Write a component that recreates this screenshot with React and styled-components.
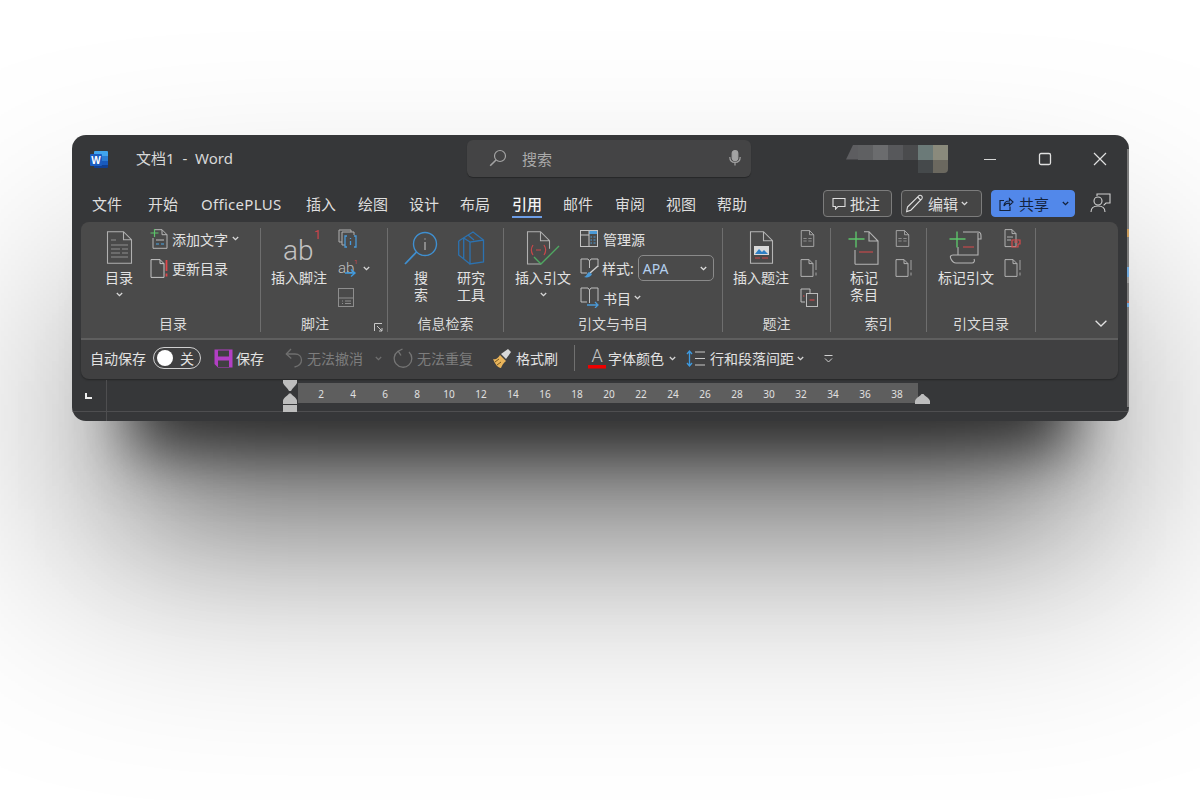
import React from 'react'
import styled, { createGlobalStyle } from 'styled-components'

const GlobalStyle = createGlobalStyle`
  html, body { margin: 0; padding: 0; background: #fff; }
  body { font-family: "Noto Sans", "Noto Sans CJK SC", sans-serif; overflow: hidden; }
  svg { display: block; flex: none; }
`

const Page = styled.div`
  width: 1200px;
  height: 800px;
  padding: 135px 0 0 72px;
  box-sizing: border-box;
  background: #fff;
  overflow: hidden;
  isolation: isolate;
`
const Frame = styled.div`
  position: relative;
  width: 1057px;
  height: 286px;
  border-radius: 14px;
  box-shadow: 0 87px 60px -58px rgba(0, 0, 0, 0.7);
  /* the two wide shadows are blurred layers, a huge box-shadow leaves seams */
  &::before {
    content: '';
    position: absolute;
    inset: 0;
    z-index: -1;
    transform: translateY(140px);
    background: rgba(0, 0, 0, 0.36);
    filter: blur(110px);
  }
  &::after {
    content: '';
    position: absolute;
    inset: 78px;
    z-index: -1;
    transform: translateY(167px);
    background: rgba(0, 0, 0, 0.32);
    filter: blur(60px);
  }
`
const Win = styled.div`
  width: 100%;
  height: 100%;
  background: #363739;
  border-radius: 14px;
  overflow: hidden;
  display: flex;
  flex-direction: column;
`
const EdgeStrip = styled.div`
  position: absolute;
  right: 0;
  top: 14px;
  bottom: 14px;
  width: 2px;
  background: linear-gradient(
    to bottom,
    #7c7c7c 0 80px,
    #c89a5a 80px 88px,
    #7c7c7c 88px 118px,
    #6fa8dc 118px 128px,
    #9a9a9a 128px 134px,
    #7c7c7c 134px 152px,
    #b06a5a 152px 154px,
    #6fa8dc 154px 158px,
    #7c7c7c 158px
  );
`

const TitleBar = styled.div`
  height: 47px;
  display: flex;
  align-items: center;
  flex: none;
  color: #dcdcdc;
`
const LogoSlot = styled.div`
  margin: 2px 0 0 18px;
  width: 46px;
`
const DocTitle = styled.div`
  width: 331px;
  margin-top: -2px;
  font-size: 15px;
  white-space: pre;
  color: #d8d8d8;
`
const SearchBox = styled.div`
  width: 284px;
  height: 37px;
  margin-top: -1px;
  border-radius: 6px;
  background: #444445;
  box-shadow: 0 1px 1px rgba(0, 0, 0, 0.3);
  display: flex;
  align-items: center;
  padding: 0 10px 0 22px;
  box-sizing: border-box;
  color: #a9a9a9;
  font-size: 15px;
  gap: 15px;
`
const MicSlot = styled.div`
  margin-left: auto;
`
const Mosaic = styled.div`
  margin-left: 95px;
  width: 102px;
  height: 28px;
  display: grid;
  grid-template-columns: 12px repeat(6, 15px);
  grid-template-rows: 15px 13px;
`
const Cell = styled.div`
  background: ${({ $c }) => $c};
  &:first-child {
    clip-path: polygon(60% 0, 100% 0, 100% 100%, 0 100%);
  }
  &:last-child {
    border-radius: 0 0 4px 0;
  }
`
const WinControls = styled.div`
  display: flex;
  align-items: center;
  margin-left: 35px;
  gap: 41px;
`

const TabRow = styled.div`
  height: 40px;
  flex: none;
  display: flex;
  align-items: center;
  padding-left: 20px;
`
const Tab = styled.div`
  width: ${({ $w }) => $w}px;
  flex: none;
  position: relative;
  margin-top: 4px;
  font-size: 15px;
  line-height: 22px;
  white-space: nowrap;
  letter-spacing: ${({ $ls }) => $ls ?? 0}px;
  color: ${({ $active }) => ($active ? '#f4f4f4' : '#dedede')};
  font-weight: ${({ $active }) => ($active ? 500 : 400)};
  &::after {
    content: '';
    display: ${({ $active }) => ($active ? 'block' : 'none')};
    position: absolute;
    left: 0;
    bottom: -3px;
    width: 30px;
    height: 2px;
    background: #6d9de6;
  }
`
const TabActions = styled.div`
  margin-left: auto;
  margin-top: 2px;
  padding-right: 18px;
  display: flex;
  align-items: center;
`
const ActionBtn = styled.div`
  height: 27px;
  width: ${({ $w }) => $w}px;
  margin-right: ${({ $mr }) => $mr}px;
  box-sizing: border-box;
  border: 1px solid ${({ $blue }) => ($blue ? '#5288ea' : '#7c7c7c')};
  border-radius: 4px;
  background: ${({ $blue }) => ($blue ? '#5288ea' : '#454545')};
  color: ${({ $blue }) => ($blue ? '#14233d' : '#e0e0e0')};
  font-size: 15px;
  display: flex;
  align-items: center;
  padding-left: ${({ $pl }) => $pl}px;
  gap: ${({ $gap }) => $gap}px;
`
const ChevGap = styled.span`
  margin-left: ${({ $ml }) => $ml}px;
`

const Ribbon = styled.div`
  position: relative;
  margin: 0 11px 0 9px;
  height: 116px;
  flex: none;
  background: #4a4a4a;
  border-radius: 8px 8px 0 0;
  display: flex;
  color: #e2e2e2;
`
const Sep = styled.div`
  width: 1px;
  margin: 6px 0;
  background: #6e6e6e;
  flex: none;
`
const Group = styled.div`
  position: relative;
  width: ${({ $w }) => $w}px;
  flex: none;
  display: flex;
  flex-direction: column;
`
const GroupBody = styled.div`
  height: 92px;
  padding: 4px 0 0 ${({ $pl }) => $pl}px;
  box-sizing: border-box;
  display: flex;
  gap: ${({ $gap }) => $gap}px;
`
const GroupLabel = styled.div`
  height: 20px;
  line-height: 20px;
  font-size: 14px;
  text-align: center;
  color: #dcdcdc;
  padding: 0 ${({ $pr }) => $pr ?? 0}px 0 ${({ $pl }) => $pl ?? 0}px;
`
const Launcher = styled.div`
  position: absolute;
  right: 4px;
  bottom: 6px;
`
const Big = styled.div`
  width: ${({ $w }) => $w}px;
  flex: none;
  display: flex;
  flex-direction: column;
  align-items: center;
  padding-top: 5px;
  font-size: 14px;
  line-height: 17px;
  text-align: center;
  white-space: nowrap;
`
const BigIcon = styled.div`
  height: 38px;
  display: flex;
  align-items: flex-start;
  justify-content: center;
`
const BigChevron = styled.div`
  height: 17px;
  display: flex;
  align-items: center;
  justify-content: center;
`
const SmallCol = styled.div`
  display: flex;
  flex-direction: column;
  margin-top: -2px;
`
const SmallRow = styled.div`
  height: 29.5px;
  display: flex;
  align-items: center;
  gap: ${({ $gap }) => $gap ?? 4}px;
  font-size: 14px;
  white-space: nowrap;
`
const StyleSelect = styled.div`
  width: 76px;
  height: 26px;
  margin-left: 2px;
  box-sizing: border-box;
  border: 1px solid #8a8a8a;
  border-radius: 5px;
  display: flex;
  align-items: center;
  justify-content: space-between;
  padding: 0 6px 0 4px;
  color: #b4cfee;
  font-size: 14px;
`
const Collapse = styled.div`
  position: absolute;
  right: 11px;
  bottom: 11px;
`

const Qat = styled.div`
  margin: 0 11px 0 9px;
  height: 41px;
  flex: none;
  box-sizing: border-box;
  border-top: 2px solid #5f5f5f;
  background: #404041;
  border-radius: 0 0 8px 8px;
  box-shadow: 0 1px 2px rgba(0, 0, 0, 0.35);
  display: flex;
  align-items: center;
  padding: 0 0 3px 9px;
  color: #e2e2e2;
  font-size: 14px;
  white-space: nowrap;
`
const QatItem = styled.div`
  display: flex;
  align-items: center;
  gap: ${({ $gap }) => $gap ?? 4}px;
  margin-left: ${({ $ml }) => $ml ?? 0}px;
  color: ${({ $dim }) => ($dim ? '#7d7d7d' : 'inherit')};
`
const Toggle = styled.div`
  width: 48px;
  height: 22px;
  box-sizing: border-box;
  border: 1px solid #cfcfcf;
  border-radius: 11px;
  display: flex;
  align-items: center;
  justify-content: space-between;
  padding: 0 6px 0 3px;
  font-size: 14px;
`
const Knob = styled.div`
  width: 16px;
  height: 16px;
  border-radius: 50%;
  background: #fff;
`
const QatSep = styled.div`
  width: 1px;
  height: 26px;
  margin-left: 16px;
  background: #707070;
`

const RulerArea = styled.div`
  position: relative;
  flex: 1;
  margin-top: 1px;
`
const CornerMark = styled.div`
  position: absolute;
  left: 13px;
  top: 13px;
  width: 7px;
  height: 6px;
  border-left: 2px solid #eee;
  border-bottom: 2px solid #eee;
  box-sizing: border-box;
`
const VLine = styled.div`
  position: absolute;
  left: 34px;
  top: 0;
  bottom: 0;
  width: 1px;
  background: #4e4e50;
`
const HLine = styled.div`
  position: absolute;
  left: 0;
  right: 0;
  top: 31px;
  height: 1px;
  background: #4e4e50;
`
const Band = styled.div`
  position: absolute;
  left: 226px;
  top: 3px;
  width: 620px;
  height: 20px;
  background: #5e5e5e;
  display: flex;
  padding-left: 7px;
  box-sizing: border-box;
`
const Tick = styled.div`
  width: 32px;
  flex: none;
  text-align: center;
  font-size: 10px;
  line-height: 22px;
  color: #e0e0e0;
`
const IndentMark = styled.div`
  position: absolute;
  left: ${({ $x }) => $x}px;
  top: ${({ $y }) => $y}px;
`
const AbSvg = styled.svg`
  margin-top: -3px;
`

const Chev = ({ c = '#d8d8d8', s = 7 }) => (
  <svg width={s} height={5} viewBox="0 0 7 5">
    <path d="M.8 1 3.500 3.700 6.200 1" fill="none" stroke={c} strokeWidth="1.300" />
  </svg>
)

const Doc = ({ w = 18, h = 20, stroke = '#b5b5b5', children }) => (
  <svg width={w} height={h} viewBox="0 0 18 20" fill="none" stroke={stroke} strokeWidth="1">
    <path d="M1.500.5h10l5 5v14h-15z M11.500.5v5h5" />
    {children}
  </svg>
)

const WordLogo = () => (
  <svg width="19" height="18" viewBox="0 0 19 18">
    <path d="M5 0h12a1 1 0 0 1 1 1v4H4V1a1 1 0 0 1 1-1z" fill="#41a5ee" />
    <rect x="4" y="5" width="14" height="5" fill="#2b7cd3" />
    <rect x="4" y="10" width="14" height="4" fill="#185abd" />
    <path d="M4 14h14v2a1 1 0 0 1-1 1H5a1 1 0 0 1-1-1z" fill="#103f91" />
    <rect x="0" y="3" width="12" height="12" rx="1" fill="#1a5cc0" />
    <text x="6" y="12.500" fontSize="10" fontWeight="700" fill="#fff" textAnchor="middle" fontFamily="Liberation Sans">W</text>
  </svg>
)

const SearchGlass = () => (
  <svg width="18" height="18" viewBox="0 0 18 18" fill="none" stroke="#a3a3a3" strokeWidth="1.200">
    <circle cx="11" cy="7" r="5.500" />
    <path d="M7 11 1.200 16.800" strokeWidth="1.600" />
  </svg>
)
const Mic = () => (
  <svg width="12" height="16" viewBox="0 0 12 16" fill="none" stroke="#a3a3a3" strokeWidth="1.200">
    <rect x="3.200" y=".6" width="5.600" height="10" rx="2.800" fill="#a3a3a3" />
    <path d="M.8 7c0 3.400 2.200 5.400 5.200 5.400s5.200-2 5.200-5.400M6 12.400V15.400" />
  </svg>
)

const BubbleIcon = () => (
  <svg width="14" height="13" viewBox="0 0 14 13" fill="none" stroke="#dedede" strokeWidth="1.100">
    <path d="M1 1.500h12v8H6l-2.400 2.600V9.500H1z" />
  </svg>
)
const PencilIcon = () => (
  <svg width="20" height="20" viewBox="0 0 20 20" fill="none" stroke="#e0e0e0" strokeWidth="1.100">
    <path d="M2.500 14 14 2.600a2.200 2.200 0 0 1 3 3L5.800 17.200 1.600 18.600z M12.600 4l3 3" />
  </svg>
)
const ShareIcon = () => (
  <svg width="15" height="15" viewBox="0 0 15 15" fill="none" stroke="#14233d" strokeWidth="1.200">
    <path d="M5 4.500H1v10h10v-4" />
    <path d="M5 10c0-3.500 2.500-5 5.500-5V2.600L14 6l-3.500 3.400V7.200C8 7.200 6 8 5 10z" />
  </svg>
)
const CoauthorIcon = () => (
  <svg width="21" height="20" viewBox="0 0 21 20" fill="none" stroke="#d0d0d0" strokeWidth="1.100">
    <path d="M7 3V1h13v9h-4l-2.400 2.400" />
    <circle cx="8" cy="8" r="4" />
    <path d="M1 19c0-4 3-6 7-6s7 2 7 6" />
  </svg>
)

const TocBig = () => (
  <svg width="27" height="33" viewBox="0 0 27 33" fill="none" stroke="#b0b0b0" strokeWidth="1.100">
    <path d="M1.500.7h16l8 8v23.600h-24z M17.500.7v8h8" />
    <path d="M5 9h5M5 14h17M5 18h9M16 18h6M5 22h9M16 22h6M5 26h17" stroke="#8d8d8d" />
  </svg>
)
const AddText = () => (
  <svg width="18" height="20" viewBox="0 0 18 20" fill="none">
    <path d="M4 .7h8l5 5v13.600H3V9" stroke="#b5b5b5" />
    <path d="M12 .7v5h5" stroke="#b5b5b5" />
    <path d="M4.500 0v8M.5 4h8" stroke="#5cc46a" strokeWidth="1.200" />
    <path d="M6 11h8" stroke="#bdbdbd" />
    <path d="M6 15h3M11 15h3" stroke="#4aa6e6" strokeWidth="1.200" />
  </svg>
)
const UpdateDoc = () => (
  <svg width="18" height="19" viewBox="0 0 18 19" fill="none">
    <path d="M1 .6h9l4 4v13.800H1z M10 .6v4h4" stroke="#c4c4c4" />
    <path d="M16.500 1v11M16.500 14.500v3" stroke="#e0464a" strokeWidth="1.800" />
  </svg>
)
const AbBig = () => (
  <AbSvg width="42" height="41" viewBox="0 -3 42 41">
    <text x="5" y="29" fontSize="28" fontWeight="300" fill="#c2c2c2" fontFamily="Roboto">ab</text>
    <text x="36" y="8" fontSize="12" fill="#d0434a" fontFamily="Roboto">1</text>
  </AbSvg>
)
const EndNote = () => (
  <svg width="20" height="20" viewBox="0 0 20 20" fill="none">
    <path d="M4 3h12v3M4 3v13h3" stroke="#b0b0b0" />
    <path d="M1 1h12v2M1 1v12h3" stroke="#b0b0b0" />
    <path d="M9 7H7v11h2M16 7h2v11h-2" stroke="#4a9ad8" strokeWidth="1.300" />
    <path d="M12.500 9v1M12.500 12v4" stroke="#4a9ad8" strokeWidth="1.300" />
  </svg>
)
const NextNote = () => (
  <svg width="20" height="20" viewBox="0 0 20 20">
    <text x="0" y="15" fontSize="15" fontWeight="300" fill="#c0c0c0" fontFamily="Roboto">ab</text>
    <text x="16" y="6" fontSize="6" fill="#d0434a" fontFamily="Roboto">1</text>
    <path d="M7 15h10M13 11.500l4 3.500-4 3.500" fill="none" stroke="#3d9ae0" strokeWidth="1.400" />
  </svg>
)
const ShowNotes = () => (
  <svg width="16" height="19" viewBox="0 0 16 19" fill="none" stroke="#8e8e8e">
    <rect x=".5" y=".5" width="15" height="18" />
    <path d="M.5 10h15M4 13h1M7 13h6M4 15.500h1M7 15.500h6" />
  </svg>
)
const LauncherIcon = () => (
  <svg width="9" height="9" viewBox="0 0 9 9" fill="none" stroke="#c8c8c8">
    <path d="M.5 8V.5H8M3 3l5 5M8 5v3H5" />
  </svg>
)
const SearchBig = () => (
  <svg width="35" height="35" viewBox="0 0 35 35" fill="none" stroke="#3f8fd0">
    <circle cx="21" cy="13" r="11.500" strokeWidth="1.400" />
    <path d="M12.500 21 1 33" strokeWidth="1.800" />
    <path d="M21 11v8M21 7.500v1" stroke="#c0c0c0" strokeWidth="1.100" />
  </svg>
)
const Research = () => (
  <svg width="27" height="34" viewBox="0 0 27 34" fill="none" stroke="#2c72b0" strokeWidth="1.300">
    <path d="M.7 10 15 1l10.500 8v22L12 33V11l13.500-2" />
    <path d="M.7 10v14l5 4V7M5.700 7v21l6.300 5M5.700 7 12 11M10 4l6 5" />
  </svg>
)
const CiteBig = () => (
  <svg width="34" height="36" viewBox="0 0 34 36" fill="none">
    <path d="M15 33H1.500V.7h13l9 9v8 M14.500.7v9h9" stroke="#b0b0b0" strokeWidth="1.100" />
    <path d="M7 14c-2 3-2 7 0 10M18 14c2 3 2 7 0 10M10 19h5" stroke="#c8474a" strokeWidth="1.200" />
    <path d="M8 26l7 7 18-18" stroke="#4fa862" strokeWidth="1.400" />
  </svg>
)
const Sources = () => (
  <svg width="18" height="18" viewBox="0 0 18 18" fill="none">
    <rect x=".5" y=".5" width="17" height="16" stroke="#c4c4c4" />
    <rect x="9" y="1" width="8" height="3" fill="#4a9ad8" />
    <path d="M1 5h8" stroke="#c4c4c4" />
    <path d="M9 1v15" stroke="#c4c4c4" />
    <path d="M10.500 7h1.500M13.500 7h2M10.500 10h1.500M13.500 10h2M10.500 13h1.500M13.500 13h2" stroke="#4a9ad8" />
  </svg>
)
const BookBrush = () => (
  <svg width="20" height="21" viewBox="0 0 20 21" fill="none">
    <path d="M1 1h7l1.500 2L11 1h7v8M9.500 3v7M1 1v14h6" stroke="#c0c0c0" />
    <path d="M18 8 10 15" stroke="#cfcfcf" strokeWidth="1.400" />
    <path d="M9 14c-2 1-2 4-5 5 3 1 7 0 8-3z" fill="#4a9ad8" />
  </svg>
)
const BookArrow = () => (
  <svg width="20" height="21" viewBox="0 0 20 21" fill="none">
    <path d="M1 1h7l1.500 2L11 1h7v13M9.500 3v13M1 1v14h6" stroke="#c0c0c0" />
    <path d="M7 18h11M15 15l3 3-3 3" stroke="#4a9ad8" strokeWidth="1.300" />
  </svg>
)
const CaptionBig = () => (
  <svg width="25" height="33" viewBox="0 0 25 33" fill="none">
    <path d="M1.500.7h13l9 9v22.600h-22z M14.500.7v9h9" stroke="#b5b5b5" strokeWidth="1.100" />
    <rect x="5" y="15" width="15" height="9" fill="#d8d8d8" />
    <path d="M6 23l4-5 3 3 2-2 4 4z" fill="#2e7fc4" />
    <path d="M6 27h5M13 27h6" stroke="#d0474a" />
  </svg>
)
const SmallDoc = () => (
  <Doc w={15} h={19}>
    <path d="M4 10h4M10 10h4M4 13h4M10 13h4" stroke="#9a9a9a" />
  </Doc>
)
const DocWarn = () => (
  <svg width="18" height="18" viewBox="0 0 18 18" fill="none">
    <path d="M1 .6h8l4 4v12.800H1z M9 .6v4h4" stroke="#b0b0b0" />
    <path d="M16 1v10M16 13.500v3" stroke="#828282" strokeWidth="1.600" />
  </svg>
)
const CrossRef = () => (
  <svg width="19" height="19" viewBox="0 0 19 19" fill="none" stroke="#bcbcbc">
    <path d="M5 14H1V1h9v4" />
    <rect x="6.500" y="5.500" width="11" height="13" />
    <path d="M3 8h1.500" stroke="#d9484a" />
    <path d="M9.500 12h5" stroke="#d9484a" />
  </svg>
)
const MarkEntry = () => (
  <svg width="33" height="34" viewBox="0 0 33 34" fill="none">
    <path d="M7 33.300V19M7 33.300h23V10l-9-9.300H16M21 .7V10h9" stroke="#b5b5b5" strokeWidth="1.100" />
    <path d="M8 .5v16M.5 8h16" stroke="#5cc46a" strokeWidth="1.400" />
    <path d="M11 21h14" stroke="#d9484a" strokeWidth="1.200" />
  </svg>
)
const MarkCite = () => (
  <svg width="35" height="34" viewBox="0 0 35 34" fill="none">
    <path d="M14 1h15c2.500 0 3 2 3 4v3h-3V2M29 1H16M29 3v21H9V16M9 24H4c-3 0-3 2-2 4 1 2 2 4 5 4h16c2 0 3-2 2-4" stroke="#b5b5b5" strokeWidth="1.100" />
    <path d="M8 .5v16M.5 8h16" stroke="#5cc46a" strokeWidth="1.400" />
    <path d="M14 16h11" stroke="#d9484a" strokeWidth="1.200" />
  </svg>
)
const CiteTable = () => (
  <svg width="17" height="19" viewBox="0 0 17 19" fill="none">
    <path d="M1 .6h7l4 4v13H1z M8 .6v4h4" stroke="#b0b0b0" />
    <path d="M3 8h6M3 11h4" stroke="#b0b0b0" />
    <path d="M8 11h8v4h-2v3H8zM10 13h4" stroke="#d9484a" strokeWidth="1.200" />
  </svg>
)

const FloppyIcon = () => (
  <svg width="19" height="19" viewBox="0 0 19 19">
    <path d="M.5.5h18v18H4l-3.500-3.500z" fill="#b23fc4" />
    <rect x="4" y="1.500" width="11" height="6" fill="#404041" />
    <rect x="4" y="11.500" width="11" height="6.500" fill="#404041" />
  </svg>
)
const UndoIcon = () => (
  <svg width="18" height="20" viewBox="0 0 18 20" fill="none" stroke="#6f6f6f" strokeWidth="1.300">
    <path d="M6 1 1.300 6l5 4.500" />
    <path d="M1.500 6H10c4 0 6.500 2.500 6.500 6 0 3.500-2.500 6-7 7" />
  </svg>
)
const RedoIcon = () => (
  <svg width="20" height="20" viewBox="0 0 20 20" fill="none" stroke="#757575" strokeWidth="1.300">
    <path d="M5 3.200A8.800 8.800 0 1 0 16 4" />
    <path d="M9.500 1 5.200 3.200 8 7.500" />
  </svg>
)
const BrushIcon = () => (
  <svg width="20" height="19" viewBox="0 0 20 19">
    <path d="M1 10c3 1 5-1 7-4l6 6c-3 2-4 5-5 7-3 0-6-4-8-9z" fill="#e9b45a" />
    <path d="M3 13l4-3M5 16l4-3" stroke="#7a5a20" fill="none" />
    <path d="M9 5l7-5 3 3-5 7z" fill="#d8d8d8" />
  </svg>
)
const FontColor = () => (
  <svg width="18" height="24" viewBox="0 -2 18 24">
    <text x="9" y="14" fontSize="18" fontWeight="300" fill="#c4c4c4" textAnchor="middle" fontFamily="Roboto">A</text>
    <rect x="0" y="17" width="18" height="3.500" fill="#f00000" />
  </svg>
)
const LineSpacing = () => (
  <svg width="20" height="19" viewBox="0 0 20 19" fill="none">
    <path d="M3.500 2v15M1 5l2.500-3L6 5M1 14l2.500 3L6 14" stroke="#3d9ae0" strokeWidth="1.300" />
    <path d="M9 3h10M9 9.500h10M9 16h10" stroke="#c8c8c8" />
  </svg>
)
const MoreIcon = () => (
  <svg width="9" height="9" viewBox="0 0 9 9" fill="none" stroke="#d0d0d0">
    <path d="M.5 1.500h8M1 4.500l3.500 3.500L8 4.500" />
  </svg>
)
const LeftMarker = () => (
  <svg width="16" height="32" viewBox="0 0 16 32" fill="#bdbdbd">
    <path d="M1 0h14v3c-1 3-5 5-6 8H7C6 8 2 6 1 3z" />
    <path d="M7 13.500h2c1 2 5 3.500 6 7V24H1v-3.500c1-3.500 5-5 6-7z" />
    <rect x="1" y="25" width="14" height="7" />
  </svg>
)
const RightMarker = () => (
  <svg width="15" height="10" viewBox="0 0 15 10" fill="#bdbdbd">
    <path d="M6.500 0h2c1 2 5.500 3.500 6.500 7v3H0V7c1-3.500 5.500-5 6.500-7z" />
  </svg>
)

const TABS = [
  ['文件', 56], ['开始', 53], ['OfficePLUS', 105, false, 0.3], ['插入', 52], ['绘图', 51], ['设计', 51],
  ['布局', 52], ['引用', 51, true], ['邮件', 52], ['审阅', 51], ['视图', 51], ['帮助', 60],
]
const MOSAIC = [
  '#5d5d60', '#5f6062', '#6b6c6e', '#57585b', '#4a4b4d', '#6b7a78', '#8a8a7c',
  '#363739', '#363739', '#363739', '#363739', '#363739', '#45494b', '#6b685f',
]
const TICKS = [2, 4, 6, 8, 10, 12, 14, 16, 18, 20, 22, 24, 26, 28, 30, 32, 34, 36, 38]

const App = () => {
  return (
    <>
      <GlobalStyle />
      <Page>
        <Frame>
          <Win>
            <TitleBar>
              <LogoSlot><WordLogo /></LogoSlot>
              <DocTitle>{'文档1  -  Word'}</DocTitle>
              <SearchBox>
                <SearchGlass />
                搜索
                <MicSlot><Mic /></MicSlot>
              </SearchBox>
              <Mosaic>
                {MOSAIC.map((c, i) => <Cell key={i} $c={c} />)}
              </Mosaic>
              <WinControls>
                <svg width="14" height="14" viewBox="0 0 14 14" stroke="#d6d6d6"><path d="M1 7.500h12" /></svg>
                <svg width="14" height="14" viewBox="0 0 14 14" fill="none" stroke="#e0e0e0" strokeWidth="1.300"><rect x="1.500" y="1.500" width="11" height="11" rx="1.500" /></svg>
                <svg width="14" height="14" viewBox="0 0 14 14" stroke="#e0e0e0" strokeWidth="1.200"><path d="M1 1l12 12M13 1 1 13" /></svg>
              </WinControls>
            </TitleBar>

            <TabRow>
              {TABS.map(([name, w, active, ls]) => (
                <Tab key={name} $w={w} $active={active} $ls={ls}>{name}</Tab>
              ))}
              <TabActions>
                <ActionBtn $w={69} $mr={9} $pl={8} $gap={4}><BubbleIcon />批注</ActionBtn>
                <ActionBtn $w={81} $mr={9} $pl={3} $gap={3}><PencilIcon />编辑<Chev /></ActionBtn>
                <ActionBtn $w={84} $mr={15} $pl={7} $gap={5} $blue>
                  <ShareIcon />共享<ChevGap $ml={8}><Chev c="#14233d" /></ChevGap>
                </ActionBtn>
                <CoauthorIcon />
              </TabActions>
            </TabRow>

            <Ribbon>
              <Group $w={179}>
                <GroupBody $pl={18} $gap={11}>
                  <Big $w={40}>
                    <BigIcon><TocBig /></BigIcon>
                    目录
                    <BigChevron><Chev /></BigChevron>
                  </Big>
                  <SmallCol>
                    <SmallRow $gap={4}><AddText />添加文字<Chev /></SmallRow>
                    <SmallRow $gap={4}><UpdateDoc />更新目录</SmallRow>
                  </SmallCol>
                </GroupBody>
                <GroupLabel $pl={5}>目录</GroupLabel>
              </Group>
              <Sep />
              <Group $w={126}>
                <GroupBody $pl={8} $gap={9}>
                  <Big $w={60}>
                    <BigIcon><AbBig /></BigIcon>
                    插入脚注
                  </Big>
                  <SmallCol>
                    <SmallRow><EndNote /></SmallRow>
                    <SmallRow $gap={5}><NextNote /><Chev /></SmallRow>
                    <SmallRow><ShowNotes /></SmallRow>
                  </SmallCol>
                </GroupBody>
                <GroupLabel $pr={18}>脚注</GroupLabel>
                <Launcher><LauncherIcon /></Launcher>
              </Group>
              <Sep />
              <Group $w={115}>
                <GroupBody $pl={17} $gap={18}>
                  <Big $w={32}>
                    <BigIcon><SearchBig /></BigIcon>
                    搜<br />索
                  </Big>
                  <Big $w={32}>
                    <BigIcon><Research /></BigIcon>
                    研究<br />工具
                  </Big>
                </GroupBody>
                <GroupLabel>信息检索</GroupLabel>
              </Group>
              <Sep />
              <Group $w={218}>
                <GroupBody $pl={9} $gap={7}>
                  <Big $w={60}>
                    <BigIcon><CiteBig /></BigIcon>
                    插入引文
                    <BigChevron><Chev /></BigChevron>
                  </Big>
                  <SmallCol>
                    <SmallRow $gap={5}><Sources />管理源</SmallRow>
                    <SmallRow $gap={2}>
                      <BookBrush />样式:
                      <StyleSelect>APA<Chev c="#e0e0e0" /></StyleSelect>
                    </SmallRow>
                    <SmallRow $gap={3}><BookArrow />书目<Chev /></SmallRow>
                  </SmallCol>
                </GroupBody>
                <GroupLabel>引文与书目</GroupLabel>
              </Group>
              <Sep />
              <Group $w={107}>
                <GroupBody $pl={8} $gap={9}>
                  <Big $w={60}>
                    <BigIcon><CaptionBig /></BigIcon>
                    插入题注
                  </Big>
                  <SmallCol>
                    <SmallRow><SmallDoc /></SmallRow>
                    <SmallRow><DocWarn /></SmallRow>
                    <SmallRow><CrossRef /></SmallRow>
                  </SmallCol>
                </GroupBody>
                <GroupLabel>题注</GroupLabel>
              </Group>
              <Sep />
              <Group $w={95}>
                <GroupBody $pl={17} $gap={15}>
                  <Big $w={32}>
                    <BigIcon><MarkEntry /></BigIcon>
                    标记<br />条目
                  </Big>
                  <SmallCol>
                    <SmallRow><SmallDoc /></SmallRow>
                    <SmallRow><DocWarn /></SmallRow>
                  </SmallCol>
                </GroupBody>
                <GroupLabel>索引</GroupLabel>
              </Group>
              <Sep />
              <Group $w={108}>
                <GroupBody $pl={9} $gap={8}>
                  <Big $w={60}>
                    <BigIcon><MarkCite /></BigIcon>
                    标记引文
                  </Big>
                  <SmallCol>
                    <SmallRow><CiteTable /></SmallRow>
                    <SmallRow><DocWarn /></SmallRow>
                  </SmallCol>
                </GroupBody>
                <GroupLabel>引文目录</GroupLabel>
              </Group>
              <Sep />
              <Collapse>
                <svg width="12" height="7" viewBox="0 0 12 7" fill="none" stroke="#e0e0e0" strokeWidth="1.300"><path d="M.6.8 6 6l5.400-5.200" /></svg>
              </Collapse>
            </Ribbon>

            <Qat>
              <QatItem>自动保存</QatItem>
              <QatItem $ml={7}>
                <Toggle><Knob />关</Toggle>
              </QatItem>
              <QatItem $ml={13} $gap={3}><FloppyIcon />保存</QatItem>
              <QatItem $ml={21} $gap={4} $dim><UndoIcon />无法撤消</QatItem>
              <QatItem $ml={12} $dim><Chev c="#6f6f6f" /></QatItem>
              <QatItem $ml={11} $gap={4} $dim><RedoIcon />无法重复</QatItem>
              <QatItem $ml={19} $gap={4}><BrushIcon />格式刷</QatItem>
              <QatSep />
              <QatItem $ml={13} $gap={2}><FontColor />字体颜色</QatItem>
              <QatItem $ml={5}><Chev /></QatItem>
              <QatItem $ml={10} $gap={4}><LineSpacing />行和段落间距</QatItem>
              <QatItem $ml={3}><Chev /></QatItem>
              <QatItem $ml={20}><MoreIcon /></QatItem>
            </Qat>

            <RulerArea>
              <CornerMark />
              <VLine />
              <HLine />
              <Band>
                {TICKS.map((t) => <Tick key={t}>{t}</Tick>)}
              </Band>
              <IndentMark $x={210} $y={0}><LeftMarker /></IndentMark>
              <IndentMark $x={843} $y={14}><RightMarker /></IndentMark>
            </RulerArea>
          </Win>
          <EdgeStrip />
        </Frame>
      </Page>
    </>
  )
}

export default App
